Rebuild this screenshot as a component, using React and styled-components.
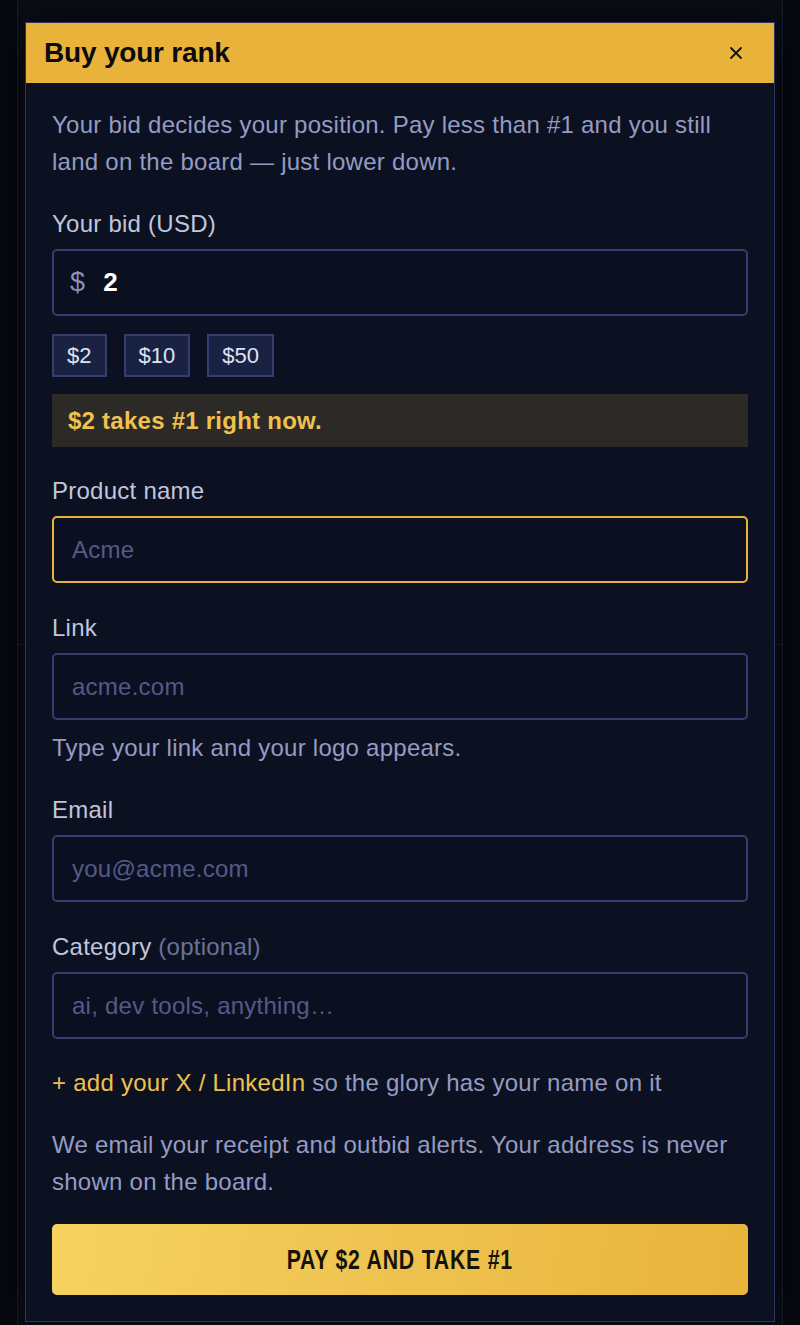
import React, { useState } from 'react';
import styled, { createGlobalStyle } from 'styled-components';

const GlobalStyle = createGlobalStyle`
  * { box-sizing: border-box; }
  html, body {
    margin: 0;
    padding: 0;
    background: #07090f;
    font-family: "Liberation Sans", Arial, sans-serif;
  }
`;

const amounts = [2, 10, 50];

const Page = styled.div`
  position: relative;
  min-height: 1325px;
  padding: 0 17px;
  background: #07090f;
`;

const BackCard = styled.div`
  min-height: 1325px;
  border-left: 1px solid #1a1e2c;
  border-right: 1px solid #1a1e2c;
  background: #0a0d15;
  display: flex;
  flex-direction: column;
`;

const BackSection = styled.div`
  height: ${p => p.h}px;
  border-bottom: 1px solid #1a1e2c;
`;

const Modal = styled.div`
  position: absolute;
  top: 22px;
  left: 25px;
  width: 750px;
  background: #0c1121;
  border: 1px solid #2d3462;
  box-shadow: 0 0 40px rgba(0, 0, 0, 0.6);
`;

const Header = styled.div`
  height: 60px;
  background: #e9b33b;
  display: flex;
  align-items: center;
  justify-content: space-between;
  padding: 0 26px 0 18px;
`;

const Title = styled.h2`
  margin: 0;
  font-size: 28px;
  font-weight: 700;
  color: #0b0b0f;
  letter-spacing: -0.2px;
`;

const Close = styled.button`
  border: 0;
  background: none;
  padding: 0;
  width: 24px;
  height: 24px;
  display: flex;
  align-items: center;
  justify-content: center;
  cursor: pointer;
`;

const Body = styled.div`
  padding: 23px 26px 26px;
  display: flex;
  flex-direction: column;
  font-size: 24px;
  letter-spacing: 0.25px;
`;

const Intro = styled.p`
  margin: 0 0 29px;
  line-height: 37px;
  color: #959bc3;
`;

const Field = styled.div`
  display: flex;
  flex-direction: column;
  margin-bottom: ${p => p.mb ?? 30}px;
`;

const Label = styled.label`
  line-height: 29px;
  color: #c1c5dd;
  margin-bottom: 11px;
`;

const Optional = styled.span`
  color: #6b7199;
`;

const InputBox = styled.div`
  height: 67px;
  border: 2px solid ${p => (p.focused ? '#e9b33b' : '#353c6e')};
  border-radius: 5px;
  background: #0b1020;
  display: flex;
  align-items: center;
  padding: 0 16px;
  gap: 16px;
`;

const Currency = styled.span`
  font-size: 27px;
  color: #8a90b6;
`;

const Input = styled.input`
  flex: 1;
  min-width: 0;
  border: 0;
  outline: none;
  background: transparent;
  font-family: inherit;
  font-size: ${p => (p.strong ? 26 : 24)}px;
  font-weight: ${p => (p.strong ? 700 : 400)};
  letter-spacing: 0.25px;
  color: #ffffff;

  &::placeholder {
    color: #535a89;
  }
`;

const Chips = styled.div`
  display: flex;
  gap: 17px;
  margin-top: 18px;
`;

const Chip = styled.button`
  height: 43px;
  padding: 0 13px;
  border: 2px solid #353c70;
  background: #1a2244;
  color: #dfe2f0;
  font-family: inherit;
  font-size: 22px;
  cursor: pointer;
`;

const Notice = styled.div`
  margin-top: 17px;
  height: 53px;
  display: flex;
  align-items: center;
  padding: 0 16px;
  background: #2b2a27;
  color: #f0c14f;
  font-weight: 700;
`;

const Hint = styled.p`
  margin: 13px 0 33px;
  line-height: 29px;
  color: #959bc3;
`;

const Social = styled.p`
  margin: 0 0 29px;
  line-height: 29px;
  color: #959bc3;
`;

const SocialLink = styled.a`
  color: #efc04e;
  text-decoration: none;
  cursor: pointer;
`;

const Privacy = styled.p`
  margin: 0 0 24px;
  line-height: 37px;
  color: #959bc3;
`;

const PayButton = styled.button`
  height: 71px;
  border: 0;
  border-radius: 5px;
  background: linear-gradient(100deg, #f6d261 0%, #efc24f 50%, #e8b43c 100%);
  color: #15120a;
  font-family: "Liberation Sans", Arial, sans-serif;
  font-size: 28px;
  font-weight: 700;
  letter-spacing: 1px;
  text-transform: uppercase;
  cursor: pointer;
`;

const PayLabel = styled.span`
  display: inline-block;
  transform: scaleX(0.76);
`;

function TextField({ label, optional, placeholder, focused, mb, children }) {
  return (
    <Field mb={mb}>
      <Label>
        {label}
        {optional && <Optional> (optional)</Optional>}
      </Label>
      <InputBox focused={focused}>
        <Input placeholder={placeholder} />
      </InputBox>
      {children}
    </Field>
  );
}

export default function App() {
  const [bid, setBid] = useState('2');

  return (
    <>
      <GlobalStyle />
      <Page>
        <BackCard>
          <BackSection h={645} />
        </BackCard>

        <Modal>
          <Header>
            <Title>Buy your rank</Title>
            <Close aria-label="Close">
              <svg width="14" height="14" viewBox="0 0 14 14">
                <path d="M2 2 L12 12 M12 2 L2 12" stroke="#111" strokeWidth="1.8" strokeLinecap="round" />
              </svg>
            </Close>
          </Header>

          <Body>
            <Intro>
              Your bid decides your position. Pay less than #1 and you still land on the board — just lower down.
            </Intro>

            <Field mb={29}>
              <Label>Your bid (USD)</Label>
              <InputBox>
                <Currency>$</Currency>
                <Input strong value={bid} onChange={e => setBid(e.target.value)} />
              </InputBox>
              <Chips>
                {amounts.map(a => (
                  <Chip key={a} type="button" onClick={() => setBid(String(a))}>
                    ${a}
                  </Chip>
                ))}
              </Chips>
              <Notice>$2 takes #1 right now.</Notice>
            </Field>

            <TextField label="Product name" placeholder="Acme" focused />
            <TextField label="Link" placeholder="acme.com" mb={0}>
              <Hint>Type your link and your logo appears.</Hint>
            </TextField>
            <TextField label="Email" placeholder="you@acme.com" />
            <TextField label="Category" optional placeholder="ai, dev tools, anything…" mb={29} />

            <Social>
              <SocialLink>+ add your X / LinkedIn</SocialLink> so the glory has your name on it
            </Social>

            <Privacy>
              We email your receipt and outbid alerts. Your address is never shown on the board.
            </Privacy>

            <PayButton type="button">
              <PayLabel>Pay $2 and take #1</PayLabel>
            </PayButton>
          </Body>
        </Modal>
      </Page>
    </>
  );
}
